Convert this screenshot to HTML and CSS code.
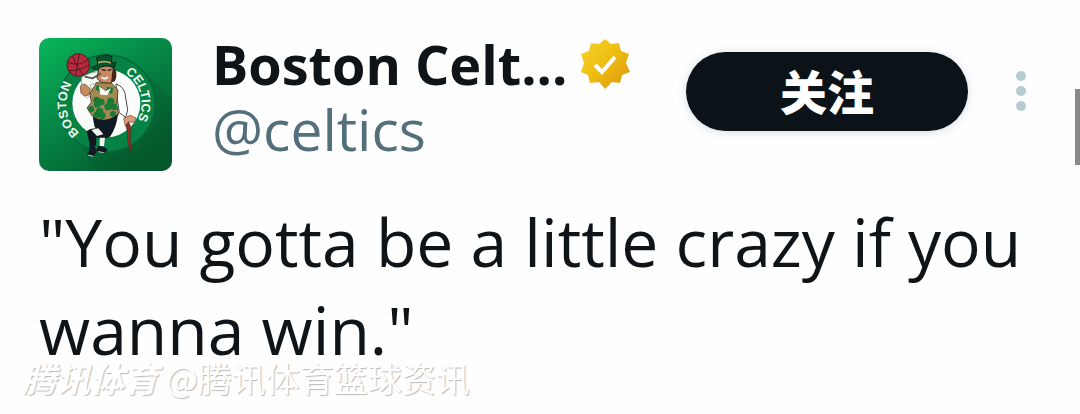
FILE: index.html
```html
<!DOCTYPE html>
<html lang="zh-cn">
<head>
    <meta charset="UTF-8" />
    <title>Boston Celtics</title>
    <link rel="stylesheet" href="styles.css">
</head>
<body>
    <div class="post">
        <div class="header">
            <svg class="avatar" viewBox="27 24 399 399" role="img" aria-label="Boston Celtics">
                <defs>
                    <linearGradient id="field" x1="0" y1="0" x2="0.7" y2="1">
                        <stop offset="0" stop-color="#08b75a" />
                        <stop offset="0.45" stop-color="#068a47" />
                        <stop offset="1" stop-color="#045a2c" />
                    </linearGradient>
                </defs>
                <rect x="27" y="24" width="399" height="399" fill="url(#field)" />
                <path d="M330 110 L426 210 V423 H200 L150 340 Z" fill="#034d27" opacity="0.2" />
                <!-- 圆环 -->
                <circle cx="230" cy="220" r="145" fill="#078245" stroke="#04663a" stroke-width="4" />
                <circle cx="229" cy="220" r="102" fill="#fbfdfb" />
                <path id="ring-left" d="M148 309 A119 119 0 0 1 145 136" fill="none" />
                <text class="ring-text"><textPath href="#ring-left">BOSTON</textPath></text>
                <path id="ring-right" d="M285 129 A109 109 0 0 1 296 304" fill="none" />
                <text class="ring-text"><textPath href="#ring-right">CELTICS</textPath></text>
                <!-- 篮球 -->
                <circle cx="145" cy="105" r="34" fill="#b52a3c" stroke="#4c1c22" stroke-width="3" />
                <path d="M113 96 Q146 112 176 88 M116 122 Q150 124 179 103 M127 77 Q136 108 160 135 M148 71 Q142 105 137 138" fill="none" stroke="#5b1722" stroke-width="3" />
                <!-- 手臂 -->
                <path d="M155 141 Q180 126 205 125 L210 154 L180 166 L190 190 L172 204 L153 190 Z" fill="#f4f6f2" stroke="#8a8c88" stroke-width="2" />
                <path d="M151 170 Q157 158 169 165 L181 177 L178 194 L164 198 L153 188 Z" fill="#c98b5b" stroke="#5d4431" stroke-width="2" />
                <path d="M258 162 Q279 168 285 190 L293 240 L287 262 L268 248 L262 208 Z" fill="#fff" stroke="#464a48" stroke-width="3" />
                <path d="M281 265 L301 256 L318 264 L313 277 L294 276 L286 287 Z" fill="#d89b79" stroke="#653f2b" stroke-width="2" />
                <path d="M296 277 Q306 292 300 319 L305 371 Q290 342 293 306 L287 286 Z" fill="#8d3328" stroke="#52241a" stroke-width="2" />
                <!-- 头和帽子 -->
                <path d="M207 112 Q233 98 252 117 L255 145 L242 160 L215 158 L201 145 Z" fill="#c98b63" stroke="#3c2b21" stroke-width="3" />
                <path d="M249 111 Q266 125 255 153 L243 158 L246 132 Z" fill="#45251a" />
                <path d="M199 83 Q223 67 246 80 L244 100 L258 96 L253 112 Q224 101 199 119 L184 113 L204 104 Z" fill="#07542d" stroke="#08291b" stroke-width="3" />
                <path d="M204 98 Q226 91 243 99" fill="none" stroke="#b5a56b" stroke-width="5" />
                <path d="M215 119 L228 121 M233 122 L244 118" stroke="#221b16" stroke-width="4" />
                <path d="M213 130 L188 145 L164 140" fill="none" stroke="#50514a" stroke-width="5" />
                <path d="M215 142 Q225 150 234 141" fill="none" stroke="#fff" stroke-width="5" />
                <!-- 背心 -->
                <path d="M200 158 L245 160 L264 180 L260 225 L266 254 Q225 286 187 258 L171 234 L184 217 L180 190 Z" fill="#a68952" stroke="#4f4a2b" stroke-width="3" />
                <g fill="#167b35">
                    <path d="M201 164 l14 8 -5 13 -14 -6 Z M232 170 l18 4 -4 17 -18 -5 Z" />
                    <circle cx="200" cy="210" r="10" />
                    <circle cx="214" cy="216" r="10" />
                    <circle cx="202" cy="223" r="10" />
                    <circle cx="242" cy="214" r="11" />
                    <circle cx="252" cy="230" r="10" />
                    <circle cx="234" cy="230" r="11" />
                    <circle cx="184" cy="237" r="9" />
                    <circle cx="209" cy="244" r="11" />
                    <circle cx="200" cy="255" r="10" />
                    <circle cx="217" cy="257" r="10" />
                    <circle cx="249" cy="252" r="9" />
                </g>
                <path d="M207 169 L226 184 L243 175 L232 196 L211 194 Z" fill="#f7f9f4" />
                <!-- 裤子和鞋 -->
                <path d="M188 260 Q225 283 264 252 Q260 292 240 320 L211 321 L213 304 L194 292 Z" fill="#101a24" />
                <path d="M170 304 Q184 291 218 297 L240 321 L215 328 L199 322 L198 346 L180 345 Z" fill="#111820" />
                <path d="M184 300 L205 295 L220 313 L201 318 Z M209 323 L225 323 L222 349 L209 347 Z" fill="#f2f5ef" />
                <path d="M178 335 L195 345 L199 368 L189 379 L171 375 L179 360 Z M205 347 L223 351 L233 360 L222 369 L196 363 Z" fill="#101b25" />
                <path d="M174 375 L190 379 M205 365 L221 368" stroke="#b9cbbf" stroke-width="3" />
            </svg>
            <div class="user">
                <div class="name">
                    <span>Boston Celt...</span>
                    <svg class="badge" viewBox="0 0 50 52" role="img" aria-label="Verified">
                        <defs>
                            <linearGradient id="gold" x1="0" y1="0" x2="1" y2="1">
                                <stop offset="0" stop-color="#f7d52c" />
                                <stop offset="0.5" stop-color="#eebc10" />
                                <stop offset="1" stop-color="#dc9411" />
                            </linearGradient>
                        </defs>
                        <path d="M25 1 L31 6 L39 5 L41 13 L49 16 L46 25 L50 34 L42 37 L40 45 L32 44 L25 51 L19 44 L10 45 L8 37 L1 34 L4 25 L1 16 L9 13 L11 5 L19 6 Z" fill="url(#gold)" />
                        <path d="M15 27 L22 34 L35 19" fill="none" stroke="#fff" stroke-width="4" />
                    </svg>
                </div>
                <a class="handle" href="#">@celtics</a>
            </div>
            <button class="follow" type="button">关注</button>
            <button class="more" type="button" aria-label="更多">
                <svg viewBox="0 0 10 42">
                    <circle cx="5" cy="6" r="5" />
                    <circle cx="5" cy="21" r="5" />
                    <circle cx="5" cy="36" r="5" />
                </svg>
            </button>
        </div>
        <p class="text">"You gotta be a little crazy if you wanna win."</p>
    </div>
    <div class="watermark"><em>腾讯体育</em> <span>@腾讯体育篮球资讯</span></div>
    <div class="thumb"></div>
</body>
</html>
```

FILE: styles.css
```css
*{
    margin: 0;
    padding: 0;
    box-sizing: border-box;
}

body{
    position: relative;
    min-height: 100vh;
    background-color: #fefefe;
    color: #0f1419;
    font-family: "Open Sans", "Noto Sans CJK SC", sans-serif;
}

.post{
    padding: 38px 40px 0 39px;
}

.header{
    display: flex;
    align-items: flex-start;
}

.avatar{
    flex: none;
    width: 133px;
    height: 133px;
    border-radius: 10px;
}

.ring-text{
    fill: #eefaf0;
    font-family: "Liberation Sans", sans-serif;
    font-size: 38px;
    font-weight: bold;
}

.user{
    flex: 1;
    min-width: 0;
    margin-left: 40px;
}

.name{
    display: flex;
    align-items: center;
    gap: 13px;
    line-height: 52px;
    font-size: 54px;
    font-weight: bold;
    white-space: nowrap;
}

.badge{
    flex: none;
    width: 50px;
    height: 52px;
}

.handle{
    display: block;
    line-height: 78px;
    font-size: 57px;
    color: #536f7b;
    text-decoration: none;
}

.follow{
    flex: none;
    width: 282px;
    height: 79px;
    margin-top: 14px;
    padding-bottom: 4px;
    border: none;
    border-radius: 40px;
    background-color: #0c1318;
    box-shadow: 0 1px 8px rgba(90, 110, 150, 0.25);
    color: #fff;
    font-family: "Noto Sans CJK SC", sans-serif;
    font-size: 47px;
    font-weight: 900;
    line-height: 72px;
}

.more{
    flex: none;
    width: 10px;
    height: 42px;
    margin: 32px 14px 0 48px;
    border: none;
    background: none;
}

.more svg{
    display: block;
    width: 10px;
    height: 42px;
    fill: #b5cdd2;
}

.text{
    margin-top: 26px;
    font-size: 66px;
    line-height: 88px;
}

/* 水印压在正文下沿 */
.watermark{
    position: absolute;
    left: 22px;
    top: 354px;
    color: #fff;
    font-family: "Noto Sans CJK SC", sans-serif;
    font-size: 34px;
    line-height: 48px;
    white-space: nowrap;
    text-shadow: 1px 1px 1px #bbb;
}

.watermark em{
    font-weight: bold;
}

/* 滚动条滑块 */
.thumb{
    position: absolute;
    right: 0;
    top: 89px;
    width: 5px;
    height: 76px;
    background-color: #888;
}
```
